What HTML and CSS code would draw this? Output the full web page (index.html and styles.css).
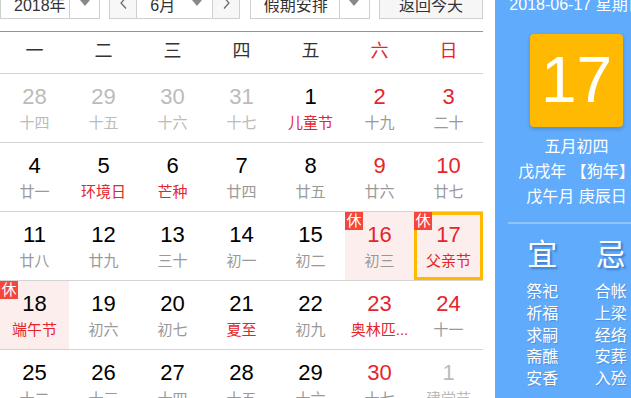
FILE: index.html
```html
<!DOCTYPE html>
<html lang="zh-CN">
<head>
<meta charset="utf-8">
<title>万年历</title>
<link rel="stylesheet" href="styles.css">
</head>
<body>
<div class="page">
  <div class="main">
    <div class="toolbar">
      <div class="select year">
        <span class="select-text">2018年</span>
        <span class="select-arrow"><i class="tri"></i></span>
      </div>
      <div class="month-group">
        <span class="nav-btn"><svg width="7" height="12" viewBox="0 0 7 12"><path d="M6 0.5 L1 6 L6 11.5" fill="none" stroke="#666" stroke-width="1.2"/></svg></span>
        <span class="month-text"><span>6月</span><i class="tri"></i></span>
        <span class="nav-btn"><svg width="7" height="12" viewBox="0 0 7 12"><path d="M1 0.5 L6 6 L1 11.5" fill="none" stroke="#666" stroke-width="1.2"/></svg></span>
      </div>
      <div class="select holiday">
        <span class="select-text">假期安排</span>
        <span class="select-arrow"><i class="tri"></i></span>
      </div>
      <div class="today-btn">返回今天</div>
    </div>

    <div class="weekdays">
      <div>一</div><div>二</div><div>三</div><div>四</div><div>五</div><div class="red">六</div><div class="red">日</div>
    </div>

    <div class="grid">
      <div class="cell other"><span class="num">28</span><span class="lunar">十四</span></div>
      <div class="cell other"><span class="num">29</span><span class="lunar">十五</span></div>
      <div class="cell other"><span class="num">30</span><span class="lunar">十六</span></div>
      <div class="cell other"><span class="num">31</span><span class="lunar">十七</span></div>
      <div class="cell"><span class="num">1</span><span class="lunar fest">儿童节</span></div>
      <div class="cell weekend"><span class="num">2</span><span class="lunar">十九</span></div>
      <div class="cell weekend"><span class="num">3</span><span class="lunar">二十</span></div>

      <div class="cell"><span class="num">4</span><span class="lunar">廿一</span></div>
      <div class="cell"><span class="num">5</span><span class="lunar fest">环境日</span></div>
      <div class="cell"><span class="num">6</span><span class="lunar fest">芒种</span></div>
      <div class="cell"><span class="num">7</span><span class="lunar">廿四</span></div>
      <div class="cell"><span class="num">8</span><span class="lunar">廿五</span></div>
      <div class="cell weekend"><span class="num">9</span><span class="lunar">廿六</span></div>
      <div class="cell weekend"><span class="num">10</span><span class="lunar">廿七</span></div>

      <div class="cell"><span class="num">11</span><span class="lunar">廿八</span></div>
      <div class="cell"><span class="num">12</span><span class="lunar">廿九</span></div>
      <div class="cell"><span class="num">13</span><span class="lunar">三十</span></div>
      <div class="cell"><span class="num">14</span><span class="lunar">初一</span></div>
      <div class="cell"><span class="num">15</span><span class="lunar">初二</span></div>
      <div class="cell weekend rest"><span class="badge">休</span><span class="num">16</span><span class="lunar">初三</span></div>
      <div class="cell weekend rest today"><span class="badge">休</span><span class="num">17</span><span class="lunar fest">父亲节</span></div>

      <div class="cell rest"><span class="badge">休</span><span class="num">18</span><span class="lunar fest">端午节</span></div>
      <div class="cell"><span class="num">19</span><span class="lunar">初六</span></div>
      <div class="cell"><span class="num">20</span><span class="lunar">初七</span></div>
      <div class="cell"><span class="num">21</span><span class="lunar fest">夏至</span></div>
      <div class="cell"><span class="num">22</span><span class="lunar">初九</span></div>
      <div class="cell weekend"><span class="num">23</span><span class="lunar fest">奥林匹...</span></div>
      <div class="cell weekend"><span class="num">24</span><span class="lunar">十一</span></div>

      <div class="cell"><span class="num">25</span><span class="lunar">十二</span></div>
      <div class="cell"><span class="num">26</span><span class="lunar">十三</span></div>
      <div class="cell"><span class="num">27</span><span class="lunar">十四</span></div>
      <div class="cell"><span class="num">28</span><span class="lunar">十五</span></div>
      <div class="cell"><span class="num">29</span><span class="lunar">十六</span></div>
      <div class="cell weekend"><span class="num">30</span><span class="lunar">十七</span></div>
      <div class="cell other"><span class="num">1</span><span class="lunar">建党节</span></div>
    </div>
  </div>

  <div class="side">
    <div class="side-date">2018-06-17 星期日</div>
    <div class="big-day">17</div>
    <div class="lunar-info">
      <div>五月初四</div>
      <div>戊戌年 【狗年】</div>
      <div>戊午月 庚辰日</div>
    </div>
    <div class="divider"></div>
    <div class="yiji">
      <div class="yiji-col">
        <div class="yiji-title">宜</div>
        <ul class="yiji-list">
          <li>祭祀</li><li>祈福</li><li>求嗣</li><li>斋醮</li><li>安香</li>
        </ul>
      </div>
      <div class="yiji-col">
        <div class="yiji-title">忌</div>
        <ul class="yiji-list">
          <li>合帐</li><li>上梁</li><li>经络</li><li>安葬</li><li>入殓</li>
        </ul>
      </div>
    </div>
  </div>
</div>
</body>
</html>
```

FILE: styles.css
```css
html, body {
  margin: 0;
  padding: 0;
  width: 631px;
  height: 398px;
  overflow: hidden;
  background: #fff;
}

body {
  font-family: "Liberation Sans", "Noto Sans CJK SC", sans-serif;
  color: #000;
}

.page {
  display: flex;
  align-items: flex-start;
  margin-top: -7px;
  width: 660px;
}

.main {
  width: 483px;
  flex: none;
}

/* toolbar */
.toolbar {
  display: flex;
  justify-content: space-between;
  height: 26px;
}

.select,
.month-group,
.today-btn {
  box-sizing: border-box;
  height: 26px;
  border: 1px solid #cfcfcf;
  display: flex;
  font-size: 16px;
  line-height: 24px;
  color: #333;
  background: #fff;
}

.year { width: 100px; }
.holiday { width: 120px; }

.select-text {
  flex: 1;
  padding-left: 13px;
  white-space: nowrap;
}

.select-arrow {
  width: 30px;
  border-left: 1px solid #cfcfcf;
  display: flex;
  justify-content: center;
  align-items: flex-start;
  padding-top: 6px;
  box-sizing: border-box;
}

.tri {
  display: block;
  width: 0;
  height: 0;
  border-left: 5px solid transparent;
  border-right: 5px solid transparent;
  border-top: 6px solid #888;
}

.month-group {
  width: 131px;
}

.nav-btn {
  width: 27px;
  background: #f7f7f7;
  display: flex;
  justify-content: center;
  align-items: flex-start;
  padding-top: 3px;
  box-sizing: border-box;
}

.nav-btn:first-child { border-right: 1px solid #cfcfcf; }
.nav-btn:last-child { border-left: 1px solid #cfcfcf; }

.month-text {
  flex: 1;
  display: flex;
  justify-content: space-between;
  align-items: flex-start;
  padding-left: 13px;
  padding-right: 10px;
}

.month-text .tri {
  margin-top: 6px;
}

.today-btn {
  width: 104px;
  justify-content: center;
  background: #f6f6f6;
}

/* weekday header */
.weekdays {
  margin-top: 12px;
  border-top: 1px solid #5e9ff0;
  border-bottom: 1px solid #d3d3d3;
  display: grid;
  grid-template-columns: repeat(7, 69px);
  height: 41px;
  line-height: 38px;
  font-size: 18px;
  color: #333;
  text-align: center;
}

.weekdays .red { color: #e4262c; }

/* grid */
.grid {
  display: grid;
  grid-template-columns: repeat(7, 69px);
  grid-auto-rows: 69px;
}

.cell {
  position: relative;
  box-sizing: border-box;
  border-bottom: 1px solid #d3d3d3;
  display: flex;
  flex-direction: column;
  align-items: center;
  padding-top: 10px;
}

.num {
  font-size: 22px;
  line-height: 26px;
  color: #000;
}

.lunar {
  margin-top: 3px;
  font-size: 15px;
  line-height: 20px;
  color: #999;
  white-space: nowrap;
}

.weekend .num { color: #e4262c; }
.lunar.fest { color: #e4262c; }

.other .num,
.other .lunar { color: #bbb; }

.rest { background: #fdeeee; }

.today { box-shadow: inset 0 0 0 3px #ffb900; }

.badge {
  position: absolute;
  top: 0;
  left: 0;
  width: 18px;
  height: 18px;
  background: #f4463a;
  color: #fff;
  font-size: 15px;
  line-height: 18px;
  text-align: center;
}

/* side panel */
.side {
  flex: none;
  width: 163px;
  margin-left: 12px;
  box-sizing: border-box;
  padding: 0 13px 20px;
  height: 420px;
  background: #60abfb;
  color: #fff;
  text-align: center;
}

.side-date {
  font-size: 16px;
  line-height: 24px;
  white-space: nowrap;
}

.big-day {
  width: 93px;
  height: 93px;
  margin: 17px auto 0;
  background: #ffb900;
  border-radius: 4px;
  box-shadow: 0 2px 4px rgba(0, 0, 0, 0.18);
  font-size: 64px;
  line-height: 93px;
  color: #fff;
}

.lunar-info {
  margin-top: 7px;
  font-size: 16px;
  line-height: 25px;
  white-space: nowrap;
}

.divider {
  margin-top: 13px;
  height: 2px;
  background: rgba(255, 255, 255, 0.3);
  margin-right: -20px;
}

.yiji {
  display: grid;
  grid-template-columns: 1fr 1fr;
  margin-top: 13px;
}

.yiji-title {
  font-size: 30px;
  line-height: 36px;
  text-shadow: 2px 2px 2px rgba(0, 40, 110, 0.35);
}

.yiji-list {
  list-style: none;
  margin: 8px 0 0;
  padding: 0;
  font-size: 16px;
  line-height: 21.75px;
  text-shadow: 1px 1px 1px rgba(0, 40, 110, 0.2);
}
```
